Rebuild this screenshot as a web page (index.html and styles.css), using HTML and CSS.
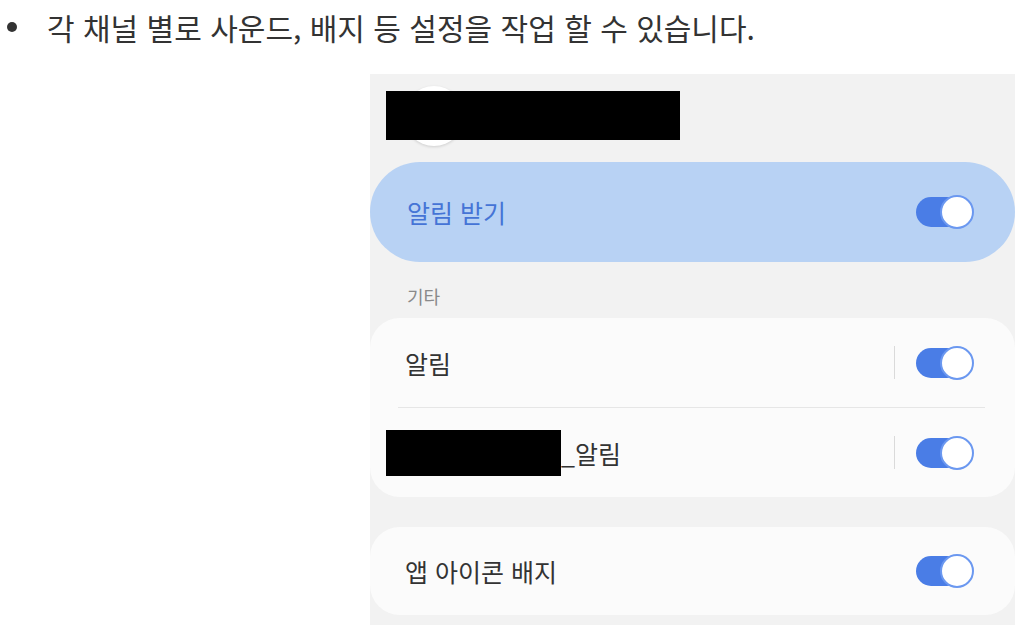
FILE: index.html
```html
<!DOCTYPE html>
<html lang="ko">
<head>
    <meta charset="UTF-8">
    <meta name="viewport" content="width=device-width, initial-scale=1.0">
    <title>알림 채널 설정</title>
    <link rel="stylesheet" href="styles.css">
</head>
<body>
    <ul class="notes">
        <li class="note">각 채널 별로 사운드, 배지 등 설정을 작업 할 수 있습니다.</li>
    </ul>

    <div class="screen">
        <!-- 앱 정보 (가려짐) -->
        <div class="profile">
            <div class="avatar"></div>
            <div class="redact redact-title"></div>
        </div>

        <div class="master">
            <span class="master-label">알림 받기</span>
            <span class="toggle"><span class="thumb"></span></span>
        </div>

        <div class="section-label">기타</div>

        <div class="card">
            <div class="row">
                <span class="row-label">알림</span>
                <span class="sep"></span>
                <span class="toggle"><span class="thumb"></span></span>
            </div>
            <div class="divider"></div>
            <div class="row">
                <span class="row-label"><span class="redact redact-inline"></span>_알림</span>
                <span class="sep"></span>
                <span class="toggle"><span class="thumb"></span></span>
            </div>
        </div>

        <div class="card">
            <div class="row">
                <span class="row-label">앱 아이콘 배지</span>
                <span class="toggle"><span class="thumb"></span></span>
            </div>
        </div>
    </div>
</body>
</html>
```

FILE: styles.css
```css
* {
    margin: 0;
    padding: 0;
    box-sizing: border-box;
}

body {
    font-family: "Noto Sans CJK KR", "Noto Sans", sans-serif;
    background: #fff;
    color: #333;
}

.notes {
    list-style: none;
    padding: 6px 0 0 7px;
}

.note {
    display: flex;
    align-items: center;
    gap: 30px;
    font-size: 30px;
    line-height: 42px;
    color: #333;
}

.note::before {
    content: "";
    width: 10px;
    height: 10px;
    border-radius: 50%;
    background: #333;
    flex: none;
}

.screen {
    width: 645px;
    margin: 26px 0 0 370px;
    background: #f2f2f2;
    padding-bottom: 10px;
}

.profile {
    position: relative;
    height: 88px;
    padding: 12px 0 0 34px;
}

.avatar {
    width: 60px;
    height: 60px;
    border-radius: 50%;
    background: #fff;
    box-shadow: 0 1px 3px rgba(0, 0, 0, 0.15);
}

.redact {
    background: #000;
}

.redact-title {
    position: absolute;
    left: 16px;
    top: 17px;
    width: 294px;
    height: 49px;
}

.redact-inline {
    display: inline-block;
    width: 175px;
    height: 46px;
    margin-left: -19px;
    vertical-align: middle;
}

.master {
    display: flex;
    align-items: center;
    height: 100px;
    padding: 0 41px 0 37px;
    border-radius: 50px;
    background: #b8d2f4;
}

.master-label {
    flex: 1;
    font-size: 25px;
    color: #4574d6;
}

.section-label {
    padding: 22px 0 10px 37px;
    font-size: 18px;
    line-height: 24px;
    color: #8a8a8a;
}

.card {
    background: #fbfbfb;
    border-radius: 30px;
    margin-bottom: 30px;
}

.card:last-child {
    margin-bottom: 0;
}

.row {
    display: flex;
    align-items: center;
    height: 89px;
    padding: 0 41px 0 35px;
}

.card:last-child .row {
    height: 88px;
}

.row-label {
    flex: 1;
    font-size: 25px;
    color: #333;
    display: flex;
    align-items: center;
}

.sep {
    width: 1px;
    height: 33px;
    background: #dadada;
    margin-right: 21px;
}

.divider {
    height: 1px;
    background: #e6e6e6;
    margin: 0 30px 0 28px;
}

.toggle {
    position: relative;
    display: flex;
    justify-content: flex-end;
    align-items: center;
    width: 58px;
    height: 36px;
    flex: none;
}

.toggle::before {
    content: "";
    position: absolute;
    left: 0;
    top: 3px;
    width: 46px;
    height: 30px;
    border-radius: 15px;
    background: #4a7de6;
}

.thumb {
    position: relative;
    width: 34px;
    height: 34px;
    border-radius: 50%;
    background: #fff;
    border: 2px solid #6b98f0;
}
```
